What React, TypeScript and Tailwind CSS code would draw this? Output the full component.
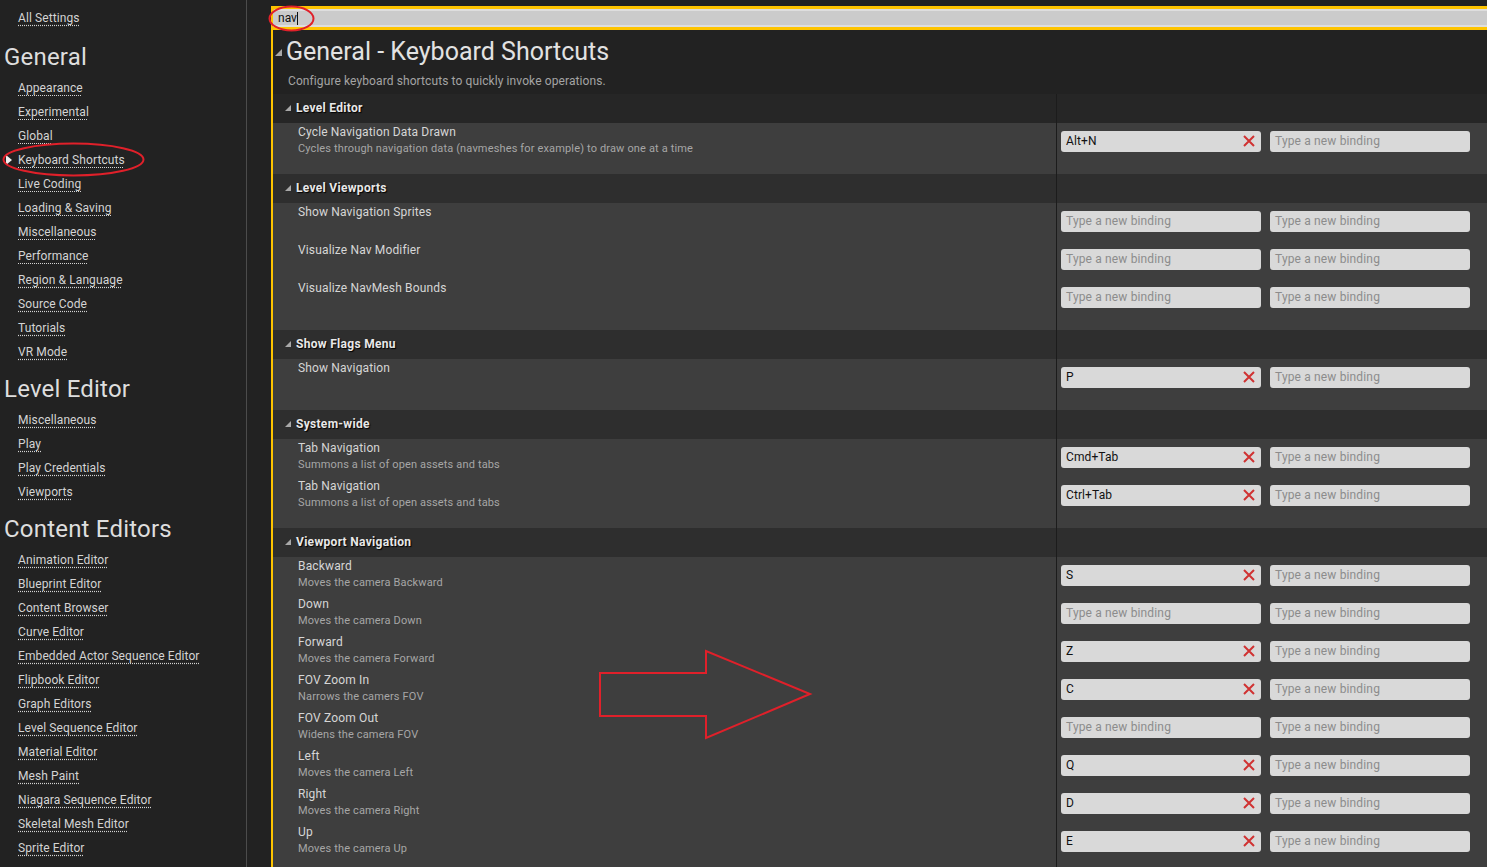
import React from "react";

type Item = { name: string; desc?: string; key?: string };
type Section = { title: string; items: Item[] };

const sections: Section[] = [
  {
    title: "Level Editor",
    items: [
      {
        name: "Cycle Navigation Data Drawn",
        desc: "Cycles through navigation data (navmeshes for example) to draw one at a time",
        key: "Alt+N",
      },
    ],
  },
  {
    title: "Level Viewports",
    items: [
      { name: "Show Navigation Sprites" },
      { name: "Visualize Nav Modifier" },
      { name: "Visualize NavMesh Bounds" },
    ],
  },
  {
    title: "Show Flags Menu",
    items: [{ name: "Show Navigation", key: "P" }],
  },
  {
    title: "System-wide",
    items: [
      { name: "Tab Navigation", desc: "Summons a list of open assets and tabs", key: "Cmd+Tab" },
      { name: "Tab Navigation", desc: "Summons a list of open assets and tabs", key: "Ctrl+Tab" },
    ],
  },
  {
    title: "Viewport Navigation",
    items: [
      { name: "Backward", desc: "Moves the camera Backward", key: "S" },
      { name: "Down", desc: "Moves the camera Down" },
      { name: "Forward", desc: "Moves the camera Forward", key: "Z" },
      { name: "FOV Zoom In", desc: "Narrows the camers FOV", key: "C" },
      { name: "FOV Zoom Out", desc: "Widens the camera FOV" },
      { name: "Left", desc: "Moves the camera Left", key: "Q" },
      { name: "Right", desc: "Moves the camera Right", key: "D" },
      { name: "Up", desc: "Moves the camera Up", key: "E" },
    ],
  },
];

const sidebar: { heading: string; links: string[] }[] = [
  {
    heading: "General",
    links: [
      "Appearance",
      "Experimental",
      "Global",
      "Keyboard Shortcuts",
      "Live Coding",
      "Loading & Saving",
      "Miscellaneous",
      "Performance",
      "Region & Language",
      "Source Code",
      "Tutorials",
      "VR Mode",
    ],
  },
  {
    heading: "Level Editor",
    links: ["Miscellaneous", "Play", "Play Credentials", "Viewports"],
  },
  {
    heading: "Content Editors",
    links: [
      "Animation Editor",
      "Blueprint Editor",
      "Content Browser",
      "Curve Editor",
      "Embedded Actor Sequence Editor",
      "Flipbook Editor",
      "Graph Editors",
      "Level Sequence Editor",
      "Material Editor",
      "Mesh Paint",
      "Niagara Sequence Editor",
      "Skeletal Mesh Editor",
      "Sprite Editor",
    ],
  },
];

function Collapse({ size = 6 }: { size?: number }) {
  return (
    <svg width={size} height={size} viewBox="0 0 6 6" className="shrink-0">
      <polygon points="6,0 6,6 0,6" fill="#a8a8a8" />
    </svg>
  );
}

function Binding({ value }: { value?: string }) {
  return (
    <div className="w-[200px] h-[21px] rounded-[3px] bg-[#d9d9d9] flex items-center pl-[5px] pr-[6px]">
      {value ? (
        <>
          <span className="flex-1 text-[12px] tracking-[0.1px] text-[#111]">{value}</span>
          <svg width="12" height="12" viewBox="0 0 12 12">
            <path d="M1 1 L11 11 M11 1 L1 11" stroke="#d03232" strokeWidth="2" />
          </svg>
        </>
      ) : (
        <span className="text-[12px] tracking-[0.15px] text-[#8c8c8c]">Type a new binding</span>
      )}
    </div>
  );
}

function SectionBlock({ section, first }: { section: Section; first: boolean }) {
  return (
    <div>
      <div className={`flex h-[28.5px] ${first ? "bg-[#262626]" : "bg-[#2e2e2e]"}`}>
        <div className="w-[783px] flex items-center gap-[5px] pl-[12px]">
          <Collapse />
          <span className="text-[12px] font-bold tracking-[0.3px] text-[#e8e8e8] [text-shadow:1px_1px_1px_#000]">
            {section.title}
          </span>
        </div>
        <div className="flex-1 border-l border-[#1c1c1c]" />
      </div>
      <div className="flex bg-[#3e3e3e]">
        <div className="w-[783px] pt-[2px] pb-[11.5px] pl-[25px]">
          {section.items.map((it, i) => (
            <div key={i} className="h-[38px]">
              <div className="text-[12px] leading-[15px] tracking-[0.15px] text-[#d6d6d6]">{it.name}</div>
              {it.desc && (
                <div className="text-[11px] leading-[17px] tracking-[0.15px] text-[#a6a6a6]">{it.desc}</div>
              )}
            </div>
          ))}
        </div>
        <div className="flex-1 border-l border-[#1c1c1c] pt-[2px] pb-[11.5px] pl-[4px]">
          {section.items.map((it, i) => (
            <div key={i} className="h-[38px] pt-[6px] flex gap-[9px]">
              <Binding value={it.key} />
              <Binding />
            </div>
          ))}
        </div>
      </div>
    </div>
  );
}

export default function App() {
  return (
    <div className="relative w-[1487px] h-[867px] overflow-hidden bg-[#222222] flex font-['Roboto',sans-serif]">
      {/* sidebar */}
      <aside className="w-[247px] shrink-0 border-r border-[#4c4c4c] pt-[6px]">
        <div className="h-[24px] flex items-center pl-[18px]">
          <span className="text-[12px] tracking-[0.1px] text-[#d4d4d4] underline decoration-dotted underline-offset-[3px]">
            All Settings
          </span>
        </div>
        {sidebar.map((group, gi) => (
          <div key={group.heading}>
            <div
              className={`h-[28px] pl-[4px] text-[24px] leading-[28px] tracking-[0.2px] text-[#dedede] mb-[5px] ${
                gi === 0 ? "mt-[13px]" : "mt-[11px]"
              }`}
            >
              {group.heading}
            </div>
            {group.links.map((link) => (
              <div key={link} className="relative h-[24px] flex items-center pl-[18px]">
                {link === "Keyboard Shortcuts" && group.heading === "General" && (
                  <svg width="6" height="10" viewBox="0 0 6 10" className="absolute left-[6px] top-[7px]">
                    <polygon points="0,0 6,5 0,10" fill="#f0f0f0" />
                  </svg>
                )}
                <span className="text-[12px] tracking-[0.1px] text-[#d4d4d4] underline decoration-dotted underline-offset-[3px] whitespace-nowrap">
                  {link}
                </span>
              </div>
            ))}
          </div>
        ))}
      </aside>

      <div className="w-[24px] shrink-0" />

      {/* main panel */}
      <main className="flex-1 mt-[6px] border-l-2 border-[#fec400] flex flex-col">
        <div className="h-[24px] border-y-[3px] border-[#fec400] bg-[#fec400]">
          <div className="h-full bg-[#cbcbcb] border-y-2 border-[#dedede] flex items-center pl-[5px] rounded-tl-[3px]">
            <span className="text-[12px] text-[#111]">nav</span>
            <span className="w-px h-[13px] bg-[#111]" />
          </div>
        </div>

        <div className="pt-[8px] pb-[5px]">
          <div className="flex items-center gap-[4px] pl-[2px] h-[28px]">
            <Collapse size={7} />
            <span className="text-[25px] leading-[28px] text-[#e2e2e2]">General - Keyboard Shortcuts</span>
          </div>
          <div className="mt-[7px] pl-[15px] text-[12px] leading-[16px] tracking-[0.1px] text-[#a4a4a4]">
            Configure keyboard shortcuts to quickly invoke operations.
          </div>
        </div>

        {sections.map((s, i) => (
          <SectionBlock key={s.title} section={s} first={i === 0} />
        ))}
      </main>

      {/* red annotations */}
      <svg className="absolute inset-0 pointer-events-none" width="1487" height="867">
        <ellipse cx="291.5" cy="18.5" rx="22" ry="12" fill="none" stroke="#e0202a" strokeWidth="2" />
        <ellipse cx="73.5" cy="159.5" rx="70" ry="16" fill="none" stroke="#e0202a" strokeWidth="2" />
        <polygon
          points="600,673 706,673 706,651 810,694 706,738 706,716 600,716"
          fill="none"
          stroke="#e0202a"
          strokeWidth="2"
        />
      </svg>
    </div>
  );
}
